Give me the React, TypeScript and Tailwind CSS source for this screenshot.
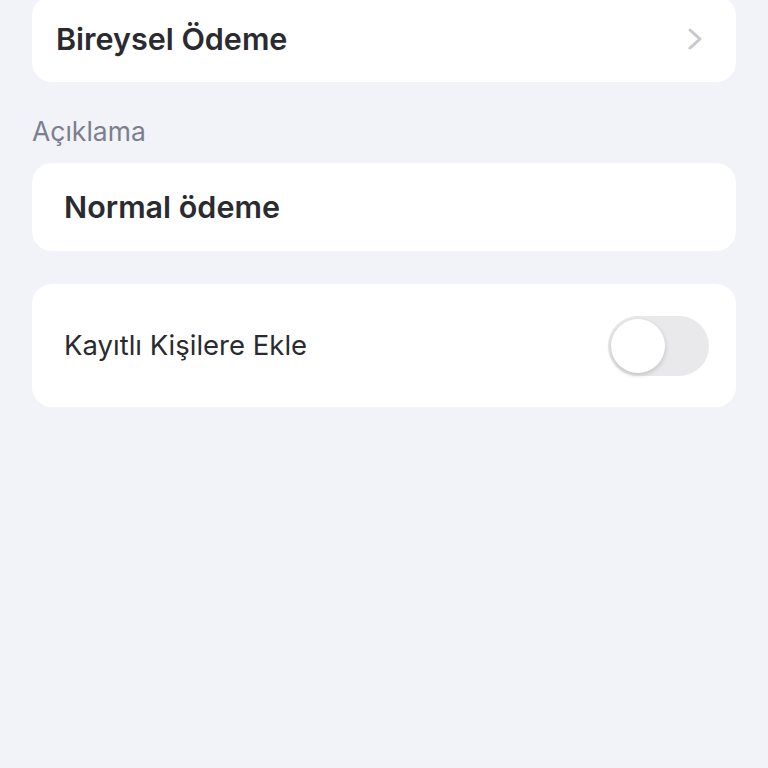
export default function App() {
  return (
    <div
      className="min-h-[768px] w-full overflow-hidden bg-[#f2f3f8] px-8"
      style={{ fontFamily: "Inter, 'Noto Sans', sans-serif" }}
    >
      <div className="-mt-[4px] flex h-[86px] items-center justify-between rounded-[20px] bg-white pl-6 pr-8">
        <span className="text-[30.5px] font-semibold text-[#2a2b30]">Bireysel Ödeme</span>
        <svg width="18" height="24" viewBox="0 0 18 24" fill="none">
          <path d="M4 3l10 9-10 9" stroke="#c7c8cf" strokeWidth="3" strokeLinecap="round" strokeLinejoin="round" />
        </svg>
      </div>

      <div className="mt-[33px] text-[26.5px] leading-[32px] text-[#7c7f8e]">Açıklama</div>

      <div className="mt-[16px] flex h-[88px] items-center rounded-[20px] bg-white px-8">
        <span className="text-[30.5px] font-semibold text-[#2a2b30]">Normal ödeme</span>
      </div>

      <div className="mt-[33px] flex h-[123px] items-center justify-between rounded-[20px] bg-white pl-8 pr-[27px]">
        <span className="text-[27.5px] text-[#2a2b30]">Kayıtlı Kişilere Ekle</span>
        <div className="flex h-[60px] w-[101px] items-center rounded-full bg-[#e9e9ec] p-[3px]">
          <div className="h-[54px] w-[54px] rounded-full bg-white shadow-[0_2px_5px_rgba(0,0,0,0.18)]" />
        </div>
      </div>
    </div>
  );
}
